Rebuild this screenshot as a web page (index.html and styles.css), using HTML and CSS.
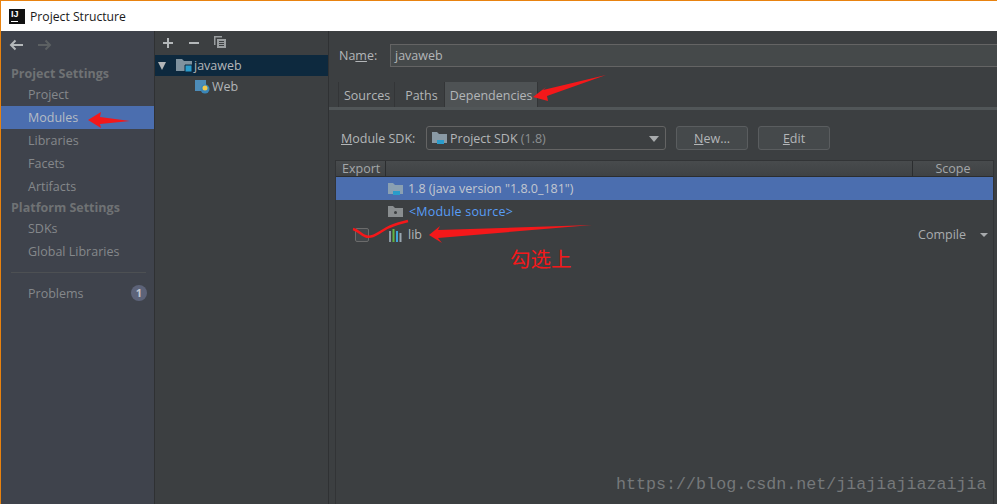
FILE: index.html
```html
<!DOCTYPE html>
<html lang="en">
<head>
<meta charset="utf-8">
<title>Project Structure</title>
<link rel="stylesheet" href="styles.css">
</head>
<body>
<div class="window">
  <header class="titlebar">
    <span class="logo"><span class="logo-text">IJ</span><span class="logo-bar"></span></span>
    <span class="title">Project Structure</span>
  </header>
  <div class="content">
    <aside class="sidebar">
      <div class="nav-arrows">
        <svg width="16" height="12" viewBox="0 0 16 12"><path d="M14 6H2M6.500 1.500L2 6l4.500 4.500" fill="none" stroke="#b4b8ba" stroke-width="2"/></svg>
        <svg width="16" height="12" viewBox="0 0 16 12"><path d="M2 6h12M9.500 1.500L14 6l-4.500 4.500" fill="none" stroke="#5c6062" stroke-width="2"/></svg>
      </div>
      <div class="group">Project Settings</div>
      <div class="item">Project</div>
      <div class="item active">Modules</div>
      <div class="item">Libraries</div>
      <div class="item">Facets</div>
      <div class="item">Artifacts</div>
      <div class="group second">Platform Settings</div>
      <div class="item">SDKs</div>
      <div class="item">Global Libraries</div>
      <div class="side-rule"></div>
      <div class="item problems">Problems<span class="badge">1</span></div>
    </aside>
    <section class="tree">
      <div class="tree-tools">
        <svg width="12" height="12" viewBox="0 0 12 12"><path d="M6 1v10M1 6h10" stroke="#b4b8ba" stroke-width="2"/></svg>
        <svg width="12" height="12" viewBox="0 0 12 12"><path d="M1 6h10" stroke="#b4b8ba" stroke-width="2"/></svg>
        <svg class="copy-icon" width="14" height="14" viewBox="0 0 14 14"><path d="M1 1h8v1.500H2.500V10H1z" fill="#9a9ea0"/><path d="M4 4h9v9H4z" fill="#9a9ea0"/><path d="M6 6.500h5M6 8.500h5M6 10.500h5" stroke="#3c3f41"/></svg>
      </div>
      <div class="tree-row selected">
        <span class="tri"></span>
        <svg width="16" height="15" viewBox="0 0 16 15"><path d="M0 1h6l2 2h8v10H0z" fill="#7f929e"/><path d="M9 7h7v7H9z" fill="#2a9ccb" stroke="#0d293e"/></svg>
        <span>javaweb</span>
      </div>
      <div class="tree-row child">
        <svg width="15" height="15" viewBox="0 0 15 15"><path d="M0 1h11v11H0z" fill="#4d8cb8"/><circle cx="10" cy="10" r="4.500" fill="#3a86b8"/><circle cx="10" cy="9" r="2.500" fill="#f2c94c"/></svg>
        <span>Web</span>
      </div>
    </section>
    <main class="main">
      <div class="name-row">
        <label class="name-label">Na<u>m</u>e:</label>
        <div class="name-input">javaweb</div>
      </div>
      <div class="tabs">
        <span class="tab">Sources</span>
        <span class="tab tab-paths">Paths</span>
        <span class="tab current">Dependencies</span>
      </div>
      <div class="sdk-row">
        <label class="sdk-label"><u>M</u>odule SDK:</label>
        <div class="combo">
          <svg width="16" height="14" viewBox="0 0 16 14"><path d="M0 1h5l2 2h8v9H0z" fill="#8a9aa5"/><path d="M5 9h7v4H5z" fill="#2a9ccb"/></svg>
          <span class="combo-text">Project SDK <span class="dim">(1.8)</span></span>
          <span class="combo-arrow"></span>
        </div>
        <button class="btn"><u>N</u>ew...</button>
        <button class="btn"><u>E</u>dit</button>
      </div>
      <div class="table">
        <div class="thead">
          <span class="th-export">Export</span>
          <span class="th-mid"></span>
          <span class="th-scope">Scope</span>
        </div>
        <div class="row picked">
          <span class="cell-check"></span>
          <svg class="row-icon" width="16" height="14" viewBox="0 0 16 14"><path d="M0 1h5l2 2h8v9H0z" fill="#8aa0b2"/><path d="M5 9h7v4H5z" fill="#2a9ccb"/></svg>
          <span>1.8 (java version "1.8.0_181")</span>
        </div>
        <div class="row">
          <span class="cell-check"></span>
          <svg class="row-icon" width="16" height="14" viewBox="0 0 16 14"><path d="M0 1h5l2 2h8v9H0z" fill="#8a8e90"/><circle cx="7.500" cy="7.500" r="1.500" fill="#3c3f41"/></svg>
          <span class="link">&lt;Module source&gt;</span>
        </div>
        <div class="row">
          <span class="cell-check"><span class="checkbox"></span></span>
          <svg class="row-icon" width="16" height="14" viewBox="0 0 16 14"><path d="M1 3h2v11H1z" fill="#8a9aa5"/><path d="M4.500 1h2v13h-2z" fill="#62b543"/><path d="M8 3h2v11H8z" fill="#40a5d8"/><path d="M11.500 5h2v9h-2z" fill="#9aa7b0"/></svg>
          <span>lib</span>
          <span class="scope">Compile<span class="scope-arrow"></span></span>
        </div>
      </div>
    </main>
  </div>
  <svg class="marks" width="997" height="504" viewBox="0 0 997 504">
    <path d="M88 120L101 112L100 117L130 121L100 124L101 128z" fill="#f4181a"/>
    <path d="M533 97L546 87L543 90L606 75L547 96L548 101z" fill="#f4181a"/>
    <path d="M429 235L440 226L438 230L592 225L438 238L442 243z" fill="#f4181a"/>
    <path d="M353 229C358 230 361 235 365 236C372 239 378 233 387 228C395 224 401 223 408 221" fill="none" stroke="#f4181a" stroke-width="2.500"/>
  </svg>
  <span class="note">勾选上</span>
  <span class="watermark">https://blog.csdn.net/jiajiajiazaijia</span>
</div>
</body>
</html>
```

FILE: styles.css
```css
* { box-sizing: border-box; }
html, body { margin: 0; padding: 0; }
body { width: 997px; height: 504px; overflow: hidden; background: #3c3f41; }
.window {
  position: relative;
  width: 997px;
  height: 504px;
  display: flex;
  flex-direction: column;
  overflow: hidden;
  border-top: 1px solid #e8820f;
  border-left: 1px solid #e8820f;
  font-family: "Open Sans", "Noto Sans", sans-serif;
  font-size: 12.500px;
  color: #b3b6b8;
}
.titlebar {
  height: 30px;
  flex: none;
  background: #fff;
  display: flex;
  align-items: center;
  padding-left: 8px;
  gap: 5px;
  color: #1a1a1a;
  font-size: 12.200px;
}
.logo {
  position: relative;
  width: 16px;
  height: 15px;
  background: #111;
  display: block;
}
.logo-text {
  position: absolute;
  left: 2px;
  top: 0;
  font: bold 9px/10px "Liberation Sans", sans-serif;
  color: #fff;
}
.logo-bar {
  position: absolute;
  left: 2px;
  bottom: 2px;
  width: 7px;
  height: 1px;
  background: #fff;
}
.content { flex: 1; display: flex; min-height: 0; }
.sidebar {
  width: 154px;
  flex: none;
  background: #3f434c;
  border-right: 1px solid #2f3133;
}
.nav-arrows {
  height: 27px;
  padding: 8px 0 0 8px;
  display: flex;
  gap: 11px;
  align-items: flex-start;
}
.group {
  height: 19px;
  margin-top: 6px;
  padding-left: 10px;
  line-height: 20px;
  font-weight: 700;
  color: #6f7274;
}
.group.second { margin-top: 0; }
.item {
  height: 23px;
  line-height: 23px;
  padding-left: 27px;
  color: #85888b;
}
.item.active { background: #4b6eaf; color: #b6bcc4; }
.side-rule {
  height: 1px;
  margin: 9px 8px 9px 10px;
  background: #4d5053;
}
.problems { position: relative; }
.badge {
  position: absolute;
  right: 7px;
  top: 3px;
  width: 16px;
  height: 16px;
  border-radius: 50%;
  background: #5d6379;
  color: #c4c7ce;
  font-size: 11px;
  font-weight: 700;
  line-height: 16px;
  text-align: center;
}
.tree {
  width: 174px;
  flex: none;
  background: #3c3f41;
  border-right: 1px solid #2f3133;
}
.tree-tools {
  height: 24px;
  padding: 6px 0 0 7px;
  display: flex;
  gap: 14px;
  align-items: flex-start;
}
.copy-icon { margin: -2px 0 0 -1px; }
.tree-row {
  height: 21px;
  display: flex;
  align-items: center;
  color: #b3b6b8;
}
.tree-row.selected {
  background: #0d293e;
  padding-left: 3px;
  gap: 3px;
}
.tree-row.child { padding-left: 40px; gap: 2px; }
.tri {
  width: 0;
  height: 0;
  border-left: 4.500px solid transparent;
  border-right: 4.500px solid transparent;
  border-top: 8px solid #b3b6b8;
  margin-right: 7px;
}
.tree-row.selected span:last-child { margin-left: -1px; }
.main { flex: 1; min-width: 0; padding-top: 13px; }
.name-row { display: flex; align-items: center; height: 23px; padding-left: 10px; }
.name-label { width: 51px; color: #b3b6b8; }
.name-input {
  flex: 1;
  height: 23px;
  line-height: 21px;
  padding-left: 4px;
  background: #45494a;
  border: 1px solid #646464;
  border-right: 0;
  color: #b3b6b8;
}
.tabs {
  display: flex;
  height: 28px;
  margin-top: 15px;
  padding-left: 9px;
  border-bottom: 3px solid #515658;
}
.tab {
  padding: 2px 4px 0 5px;
  line-height: 24px;
  height: 25px;
  border-left: 1px solid #333537;
  color: #b3b6b8;
}
.tab-paths { padding: 2px 6px 0 10px; }
.tab.current {
  background: #4e5254;
  border-right: 1px solid #333537;
  padding: 2px 4px 0 5px;
}
.sdk-row {
  display: flex;
  align-items: center;
  height: 24px;
  margin-top: 16px;
  padding-left: 12px;
}
.sdk-label { width: 85px; flex: none; }
.combo {
  width: 240px;
  height: 24px;
  flex: none;
  display: flex;
  align-items: center;
  gap: 2px;
  padding-left: 5px;
  position: relative;
  background: #3c3f41;
  border: 1px solid #646464;
  border-radius: 3px;
}
.dim { color: #8c8f91; }
.combo-arrow {
  position: absolute;
  right: 6px;
  top: 9px;
  border-left: 5px solid transparent;
  border-right: 5px solid transparent;
  border-top: 6px solid #a8abad;
}
.btn {
  width: 72px;
  height: 24px;
  margin-left: 10px;
  background: #45494b;
  border: 1px solid #5a5d5f;
  border-radius: 3px;
  color: #b3b6b8;
  font: inherit;
  padding: 0;
}
.table {
  margin: 10px 3px 0 6px;
  height: 344px;
  border-left: 1px solid #323436;
  border-right: 1px solid #323436;
  border-top: 1px solid #323436;
}
.thead {
  height: 16px;
  display: flex;
  background: linear-gradient(#484b4d, #3f4244);
  border-bottom: 1px solid #2b2d2f;
  line-height: 15px;
  color: #a4a7a9;
}
.th-export { width: 50px; padding-left: 6px; border-right: 1px solid #2b2d2f; }
.th-mid { flex: 1; }
.th-scope { width: 81px; text-align: center; border-left: 1px solid #2b2d2f; }
.row {
  height: 23px;
  display: flex;
  align-items: center;
  position: relative;
  color: #b3b6b8;
}
.row.picked { background: #4b6eaf; color: #c3c8d0; }
.cell-check { width: 52px; display: flex; padding-left: 19px; flex: none; }
.row-icon { margin-right: 4px; flex: none; }
.checkbox {
  width: 14px;
  height: 14px;
  border: 1px solid #6b6b6b;
  border-radius: 2px;
  background: #43474a;
}
.link { color: #589df6; letter-spacing: 0.200px; margin-left: 1px; }
.scope {
  position: absolute;
  right: 5px;
  top: 0;
  line-height: 23px;
  color: #a9acae;
}
.scope-arrow {
  display: inline-block;
  margin-left: 14px;
  vertical-align: 2px;
  border-left: 4px solid transparent;
  border-right: 4px solid transparent;
  border-top: 4px solid #a8abad;
}
.marks { position: absolute; left: -1px; top: -1px; pointer-events: none; }
.note {
  position: absolute;
  left: 509px;
  top: 245px;
  font-family: "Noto Sans CJK SC", sans-serif;
  font-size: 20.500px;
  line-height: 24px;
  color: #f4181a;
}
.watermark {
  position: absolute;
  left: 615px;
  top: 474px;
  font-family: "Liberation Mono", monospace;
  font-size: 16.700px;
  line-height: 20px;
  color: #75787a;
}
```
